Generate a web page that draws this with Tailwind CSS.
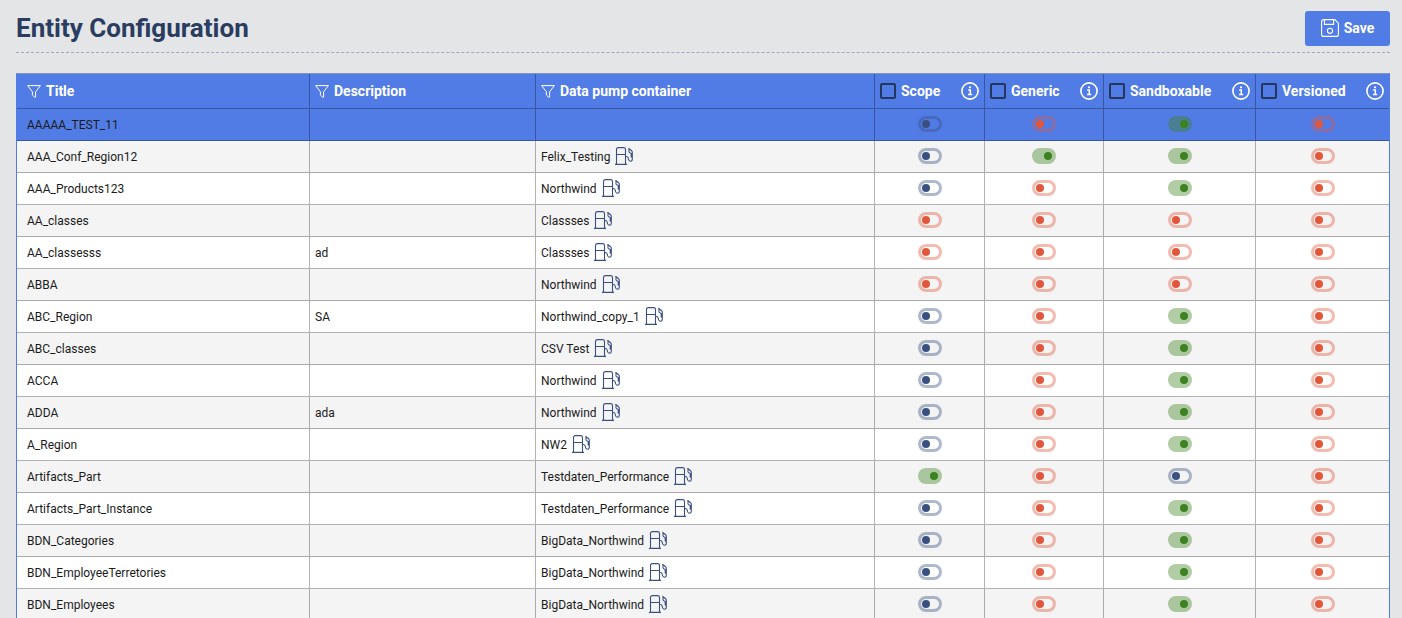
<!DOCTYPE html>
<html lang="en">
<head>
<meta charset="utf-8">
<title>Entity Configuration</title>
<script src="https://cdn.jsdelivr.net/npm/@tailwindcss/browser@4"></script>
</head>
<body class="h-screen overflow-hidden bg-[#e3e5e7] font-['Roboto',sans-serif] text-[#1b1b1b]">
<svg class="hidden">
  <symbol id="filter" viewBox="0 0 14 13"><path d="M.6.6h12.8L8.6 6.8v5.4H7.6L5.4 10V6.8Z" fill="none" stroke="currentColor" stroke-linejoin="round"/></symbol>
  <symbol id="info" viewBox="0 0 18 18"><circle cx="9" cy="9" r="8.1" fill="none" stroke="currentColor" stroke-width="1.6"/><circle cx="9" cy="5.3" r="1.1" fill="currentColor"/><path d="M7.2 8H9.3v4.4M7 12.6h4.2" fill="none" stroke="currentColor" stroke-width="1.5"/></symbol>
  <symbol id="pump" viewBox="0 0 18 18"><path d="M0 17.4h12M1.5 17V2.5Q1.5.6 3.4.6h5.2q1.9 0 1.9 1.9V17M1.5 7.5h9M10.5 9.5h1q1.2 0 1.6 1.4l.6 2q.5 1.3 1.8 1.3 1.8 0 1.8-2.2V5.2q0-.8-.6-1.4L13.4 1.2M14 2v2.6q0 .8.8 1.2l1.4.6v4.2" fill="none" stroke="currentColor" stroke-width="1.1" stroke-linejoin="round"/></symbol>
</svg>
<div class="flex h-full flex-col px-4 pr-3">
  <header class="flex h-[53px] shrink-0 items-center justify-between border-b border-dashed border-[#9fa8bf] pt-1">
    <h1 class="text-[26px] leading-8 font-bold text-[#2a3c60]">Entity Configuration</h1>
    <button type="button" class="flex h-[35px] w-[85px] items-center justify-center gap-[5px] rounded-[3px] bg-[#527ce5] text-sm font-bold text-white">
      <svg class="size-[18px]" viewBox="0 0 18 18" fill="none" stroke="currentColor" stroke-width="1.1"><path d="M2.6.6h11.2l3.6 3.6v11.2a2 2 0 0 1-2 2H2.6a2 2 0 0 1-2-2V2.6a2 2 0 0 1 2-2ZM3.4.8v4.6h9.2V.8"/><circle cx="9" cy="11.8" r="2.6"/></svg>
      Save
    </button>
  </header>
  <main class="mt-5 min-h-0 flex-1 overflow-hidden">
    <table class="w-full table-fixed border-separate border-spacing-0 border-x border-t border-x-[#527ce5] border-t-[#8793b5] bg-white text-xs">
      <colgroup><col class="w-[293px]"><col class="w-[226px]"><col><col class="w-[110px]"><col class="w-[119px]"><col class="w-[152px]"><col class="w-[133px]"></colgroup>
      <thead class="bg-[#527ce5] text-left text-sm text-white"><tr id="head"></tr></thead>
      <tbody id="rows"></tbody>
    </table>
  </main>
</div>
<script>
const headers = ['Title', 'Description', 'Data pump container', 'Scope', 'Generic', 'Sandboxable', 'Versioned'];
const rows = [
  ['AAAAA_TEST_11', '', '', 'brgr'],
  ['AAA_Conf_Region12', '', 'Felix_Testing', 'bggr'],
  ['AAA_Products123', '', 'Northwind', 'brgr'],
  ['AA_classes', '', 'Classses', 'rrrr'],
  ['AA_classesss', 'ad', 'Classses', 'rrrr'],
  ['ABBA', '', 'Northwind', 'rrrr'],
  ['ABC_Region', 'SA', 'Northwind_copy_1', 'brgr'],
  ['ABC_classes', '', 'CSV Test', 'brgr'],
  ['ACCA', '', 'Northwind', 'brgr'],
  ['ADDA', 'ada', 'Northwind', 'brgr'],
  ['A_Region', '', 'NW2', 'brgr'],
  ['Artifacts_Part', '', 'Testdaten_Performance', 'grbr'],
  ['Artifacts_Part_Instance', '', 'Testdaten_Performance', 'brgr'],
  ['BDN_Categories', '', 'BigData_Northwind', 'brgr'],
  ['BDN_EmployeeTerretories', '', 'BigData_Northwind', 'brgr'],
  ['BDN_Employees', '', 'BigData_Northwind', 'brgr'],
];
const line = 'border-r border-b border-black/30 last:border-r-0';
const knob = "relative block h-4 w-6 appearance-none rounded-full border-3 before:absolute before:top-px before:size-2 before:rounded-full before:content-['']";
const states = {
  b: 'border-[#3a5080]/40 before:left-px before:bg-[#3a5080]',
  r: 'border-[#e0573c]/40 before:left-px before:bg-[#e0573c]',
  g: 'border-transparent bg-[#3c821e]/40 before:right-px before:bg-[#3c821e]',
};
document.getElementById('head').innerHTML = headers.map((h, i) => i < 3
  ? `<th scope="col" class="h-[35px] p-0 ${i ? 'pl-[5px]' : 'pl-[10px]'} ${line}"><div class="flex items-center gap-[5px]"><button type="button" aria-label="Filter ${h}"><svg class="block h-[13px] w-3.5"><use href="#filter"/></svg></button>${h}</div></th>`
  : `<th scope="col" class="h-[35px] p-0 px-[5px] ${line}"><div class="flex items-center"><label class="flex items-center gap-[5px]"><input type="checkbox" class="size-4 appearance-none rounded-[2px] border-2 border-[#25365c]">${h}</label><button type="button" aria-label="About ${h}" class="ml-auto"><svg class="block size-[18px]"><use href="#info"/></svg></button></div></th>`
).join('');
document.getElementById('rows').innerHTML = rows.map(([t, d, p, s], n) =>
  `<tr class="${n ? (n % 2 ? 'bg-[#f4f4f4]' : 'bg-white') : 'bg-[#527ce5]'}">
  <td class="h-8 p-0 pl-[10px] ${line}">${t}</td><td class="p-0 pl-[5px] ${line}">${d}</td>
  <td class="p-0 pl-[5px] ${line}">${p ? `<div class="flex items-center gap-[5px]">${p}<button type="button" aria-label="Open ${p}" class="pb-0.5 text-[#3a5080]"><svg class="block size-[18px]"><use href="#pump"/></svg></button></div>` : ''}</td>
  ${[...s].map((c, i) => `<td class="p-0 pb-0.5 ${line}"><div class="flex justify-center"><input type="checkbox" role="switch" aria-label="${headers[i + 3]} ${t}" class="${knob} ${states[c]}" ${c === 'g' ? 'checked' : ''}></div></td>`).join('')}</tr>`
).join('');
</script>
</body>
</html>
